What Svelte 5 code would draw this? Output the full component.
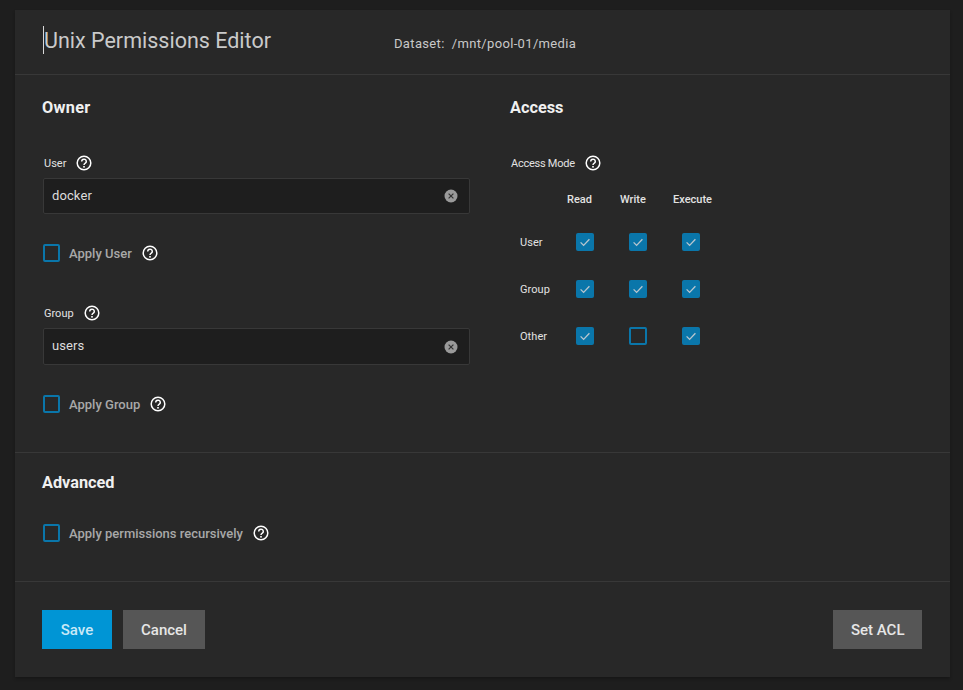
<script lang="ts">
	const modes = [
		{ name: 'User', read: true, write: true, execute: true },
		{ name: 'Group', read: true, write: true, execute: true },
		{ name: 'Other', read: true, write: false, execute: true }
	];
</script>

{#snippet help()}
	<svg class="help" viewBox="0 0 16 16" width="16" height="16" aria-hidden="true">
		<circle cx="8" cy="8" r="6.8" fill="none" stroke="#fff" stroke-width="1.5" />
		<path d="M5.7 6.4a2.3 2.2 0 1 1 3.6 1.8c-.8.5-1.3 1-1.3 1.9" fill="none" stroke="#fff" stroke-width="1.5" />
		<rect x="7.2" y="11" width="1.6" height="1.6" fill="#fff" />
	</svg>
{/snippet}

{#snippet clear()}
	<svg class="clear" viewBox="0 0 14 14" width="14" height="14" aria-hidden="true">
		<circle cx="7" cy="7" r="6.5" fill="#9a9a9a" />
		<path d="M4.6 4.6l4.8 4.8M9.4 4.6l-4.8 4.8" stroke="#333" stroke-width="1.2" />
	</svg>
{/snippet}

{#snippet box(on: boolean)}
	<span class="box" class:on>
		{#if on}
			<svg viewBox="0 0 18 18" width="18" height="18" aria-hidden="true">
				<path d="M4.6 9.4l3 3 5.8-6.2" fill="none" stroke="#b9c6cf" stroke-width="1.3" />
			</svg>
		{/if}
	</span>
{/snippet}

{#snippet applyRow(label: string)}
	<div class="apply">
		{@render box(false)}
		<span class="apply-label">{label}</span>
		{@render help()}
	</div>
{/snippet}

<div class="card">
	<header class="head">
		<h1>Unix Permissions Editor</h1>
		<div class="dataset">Dataset:&nbsp; /mnt/pool-01/media</div>
	</header>

	<section class="main">
		<div class="owner">
			<h2 class="owner-title">Owner</h2>
			<div class="label first">User {@render help()}</div>
			<div class="input"><span class="value">docker</span> {@render clear()}</div>
			{@render applyRow('Apply User')}
			<div class="label second">Group {@render help()}</div>
			<div class="input tall"><span class="value">users</span> {@render clear()}</div>
			{@render applyRow('Apply Group')}
		</div>
		<div class="access">
			<h2>Access</h2>
			<div class="label first mode">Access Mode {@render help()}</div>
			<div class="grid">
				<span></span>
				<span class="col">Read</span>
				<span class="col">Write</span>
				<span class="col">Execute</span>
				{#each modes as m}
					<span class="row-name">{m.name}</span>
					<span class="cell">{@render box(m.read)}</span>
					<span class="cell">{@render box(m.write)}</span>
					<span class="cell">{@render box(m.execute)}</span>
				{/each}
			</div>
		</div>
	</section>

	<section class="advanced">
		<h2>Advanced</h2>
		{@render applyRow('Apply permissions recursively')}
	</section>

	<footer class="actions">
		<button class="save">Save</button>
		<button>Cancel</button>
		<button class="acl">Set ACL</button>
	</footer>
</div>

<style>
	:global(body) {
		background: #1e1e1e;
		font-family: Roboto, "Liberation Sans", sans-serif;
	}

	.card {
		box-sizing: border-box;
		width: 935px;
		height: 667px;
		margin: 10px 13px 13px 15px;
		background: #282828;
		box-shadow: 0 2px 3px rgba(0, 0, 0, 0.25);
	}

	.head {
		box-sizing: border-box;
		height: 65px;
		padding: 16px 0 0 28px;
		display: flex;
		border-bottom: 1px solid #383838;
	}

	h1 {
		margin: 0;
		width: 351px;
		height: 28px;
		border-left: 1px solid #d8d8d8;
		font-size: 21.5px;
		font-weight: 400;
		line-height: 29px;
		color: #cacaca;
		box-sizing: border-box;
	}

	.dataset {
		padding-top: 10px;
		font-size: 13px;
		letter-spacing: 0.34px;
		line-height: 16px;
		color: #c8c8c8;
	}

	h2 {
		margin: 0;
		font-size: 16.3px;
		font-weight: 700;
		line-height: 20px;
		color: #f0f0f0;
	}

	.owner-title {
		letter-spacing: 0.3px;
	}

	.main {
		box-sizing: border-box;
		height: 378px;
		padding: 23px 0 0 27px;
		display: flex;
		border-bottom: 1px solid #383838;
	}

	.owner {
		width: 428px;
		flex: none;
	}

	.access {
		margin-left: 40px;
	}

	.label {
		display: flex;
		align-items: center;
		gap: 10px;
		height: 16px;
		padding-left: 2px;
		font-size: 11px;
		color: #e2e2e2;
	}

	.first {
		margin-top: 37px;
	}

	.second {
		margin-top: 43px;
	}

	.mode {
		padding-left: 1px;
		letter-spacing: -0.25px;
	}

	.input {
		box-sizing: border-box;
		display: flex;
		align-items: center;
		justify-content: space-between;
		height: 36px;
		margin: 7px 0 0 1px;
		padding: 0 17px 0 8px;
		background: #1e1e1e;
		border: 1px solid #383838;
		border-radius: 2px;
		font-size: 13px;
		letter-spacing: 0.1px;
		color: #dcdcdc;
	}

	.input.tall {
		height: 37px;
	}

	.value {
		padding-bottom: 2px;
	}

	.clear {
		margin-right: -6px;
	}

	.apply {
		display: flex;
		align-items: center;
		height: 18px;
		margin-top: 30px;
	}

	.apply .box {
		width: 17px;
		margin-left: 1px;
	}

	.apply-label {
		margin: 0 10px 0 9px;
		font-size: 13px;
		font-weight: 500;
		color: #a8a8a8;
	}

	.box {
		box-sizing: border-box;
		display: block;
		flex: none;
		width: 18px;
		height: 18px;
		border: 2px solid #0a76aa;
		border-radius: 2px;
	}

	.box.on {
		border: 0;
		background: #0a76aa;
	}

	.box svg {
		display: block;
	}

	.help,
	.clear {
		display: block;
		flex: none;
	}

	.grid {
		display: grid;
		grid-template-columns: 47px 53px 53px 53px;
		grid-template-rows: 34px;
		grid-auto-rows: 47px;
		margin: 13px 0 0 10px;
		font-size: 11px;
		color: #e2e2e2;
		align-items: center;
	}

	.col {
		padding-bottom: 4px;
		font-weight: 500;
	}

	.row-name {
		padding-top: 2px;
		letter-spacing: 0.05px;
	}

	.cell {
		padding-left: 9px;
	}

	.advanced {
		box-sizing: border-box;
		height: 129px;
		padding: 20px 0 0 27px;
		border-bottom: 1px solid #383838;
	}

	.advanced .apply {
		margin-top: 31px;
	}

	.actions {
		display: flex;
		padding: 28px 28px 0 27px;
		gap: 11px;
	}

	button {
		height: 39px;
		padding: 0 18px;
		border: 0;
		background: #565656;
		color: #e6e6e6;
		font-family: inherit;
		font-size: 15px;
		font-weight: 500;
	}

	.save {
		width: 70px;
		padding: 0;
		background: #0095d5;
		color: #c9e9f7;
	}

	.acl {
		margin-left: auto;
		padding: 0 17.5px;
	}
</style>
